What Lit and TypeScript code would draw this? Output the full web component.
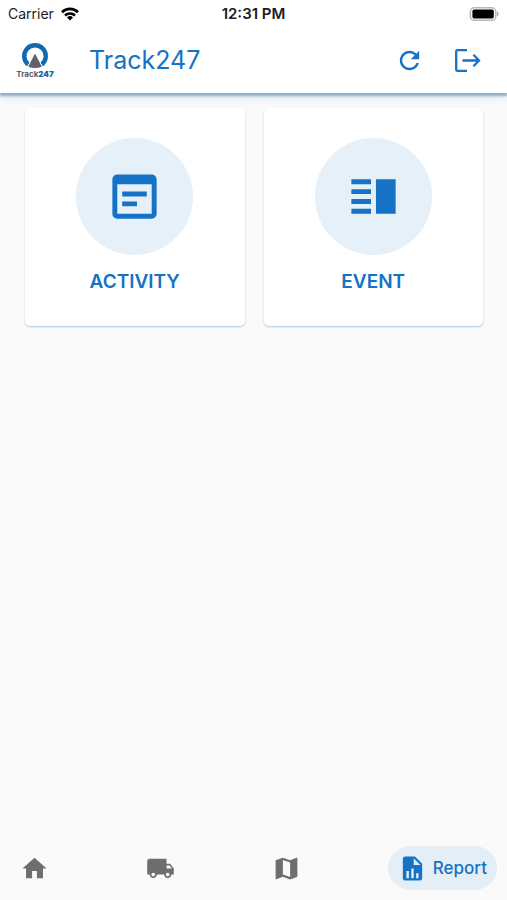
import { LitElement, html, css, svg } from "lit";
import { customElement, state } from "lit/decorators.js";
import { classMap } from "lit/directives/class-map.js";

const paths = {
  refresh:
    "M17.65 6.35C16.2 4.9 14.21 4 12 4c-4.42 0-7.99 3.58-7.99 8s3.57 8 7.99 8c3.73 0 6.84-2.55 7.73-6h-2.08c-.82 2.33-3.04 4-5.65 4-3.31 0-6-2.69-6-6s2.69-6 6-6c1.66 0 3.14.69 4.22 1.78L13 11h7V4l-2.35 2.35z",
  activity:
    "M19 3H5c-1.11 0-2 .9-2 2v14c0 1.1.89 2 2 2h14c1.1 0 2-.9 2-2V5c0-1.1-.89-2-2-2zm0 16H5V7h14v12zm-2-7H7v-2h10v2zm-4 4H7v-2h6v2z",
  event:
    "M3 15h8v-2H3v2zm0 4h8v-2H3v2zm0-8h8V9H3v2zm0-6v2h8V5H3zm10 0h8v14h-8V5z",
  home: "M10 20v-6h4v6h5v-8h3L12 3 2 12h3v8z",
  truck:
    "M20 8h-3V4H3c-1.1 0-2 .9-2 2v11h2c0 1.66 1.34 3 3 3s3-1.34 3-3h6c0 1.66 1.34 3 3 3s3-1.34 3-3h2v-5l-3-4zM6 18.5c-.83 0-1.5-.67-1.5-1.5s.67-1.5 1.5-1.5 1.5.67 1.5 1.5-.67 1.5-1.5 1.5zm13.5-9l1.96 2.5H17V9.5h2.5zm-1.5 9c-.83 0-1.5-.67-1.5-1.5s.67-1.5 1.5-1.5 1.5.67 1.5 1.5-.67 1.5-1.5 1.5z",
  map: "M20.5 3l-.16.03L15 5.1 9 3 3.36 4.9c-.21.07-.36.25-.36.48V20.5c0 .28.22.5.5.5l.16-.03L9 18.9l6 2.1 5.64-1.9c.21-.07.36-.25.36-.48V3.5c0-.28-.22-.5-.5-.5zM15 19l-6-2.11V5l6 2.11V19z",
  report:
    "M13 9h5.5L13 3.5V9M6 2h8l6 6v12a2 2 0 0 1-2 2H6a2 2 0 0 1-2-2V4c0-1.11.89-2 2-2m1 18h2v-6H7v6m4 0h2v-8h-2v8m4 0h2v-4h-2v4z",
};

type IconName = keyof typeof paths;

const icon = (name: IconName) => html`
  <svg class="icon" viewBox="0 0 24 24" aria-hidden="true">
    ${svg`<path d=${paths[name]}></path>`}
  </svg>
`;

@customElement("status-bar")
export class StatusBar extends LitElement {
  static styles = css`
    :host {
      display: grid;
      grid-template-columns: 1fr auto 1fr;
      align-items: center;
      height: 27px;
      padding: 0 8px;
      font-size: 14px;
      line-height: 20px;
      color: #1c1c1c;
    }
    .carrier {
      display: flex;
      align-items: center;
      gap: 7px;
    }
    .wifi {
      width: 18px;
      height: 14px;
    }
    .time {
      font-size: 15px;
      font-weight: 600;
    }
    .battery {
      justify-self: end;
      width: 30px;
      height: 14px;
    }
  `;

  render() {
    return html`
      <div class="carrier">
        <span>Carrier</span>
        <svg class="wifi" viewBox="0 0 18 14" aria-hidden="true">
          <g fill="none" stroke="#000" stroke-width="2.6">
            <path d="M1 5.2a11.4 11.4 0 0 1 16 0"></path>
            <path d="M4 8.5a7.2 7.2 0 0 1 10 0"></path>
          </g>
          <path d="M9 13.6l-3-3.1a4.3 4.3 0 0 1 6 0z"></path>
        </svg>
      </div>
      <span class="time">12:31 PM</span>
      <svg class="battery" viewBox="0 0 30 14" aria-hidden="true">
        <rect x="1.4" y="0.8" width="25.4" height="12.4" rx="3.8" fill="#fff" stroke="#b8b8b8" stroke-width="1.5"></rect>
        <rect x="3.4" y="2.4" width="21.4" height="9.2" rx="1.8"></rect>
        <path d="M28 4.8c2 .6 2 3.9 0 4.5z" fill="#a8a8a8"></path>
      </svg>
    `;
  }
}

@customElement("brand-logo")
export class BrandLogo extends LitElement {
  static styles = css`
    :host {
      display: flex;
      flex-direction: column;
      align-items: center;
      width: 40px;
    }
    .mark {
      width: 28px;
      height: 27px;
    }
    .name {
      font-size: 8px;
      line-height: 8px;
      font-weight: 700;
      color: #5c5c68;
    }
    .number {
      font-weight: 900;
      color: #1468ac;
    }
  `;

  render() {
    return html`
      <svg class="mark" viewBox="0 0 28 27" aria-hidden="true">
        <path d="M7.4 21.6A10.8 10.8 0 1 1 20.6 21.6" fill="none" stroke="#1268b0" stroke-width="4.4"></path>
        <path d="M14 8.5L22.4 25Q14 28 5.6 25z" fill="#fff"></path>
        <path d="M14 10.6L20.8 23.8Q14 26.4 7.2 23.8z" fill="#62606e"></path>
      </svg>
      <span class="name">Track<span class="number">247</span></span>
    `;
  }
}

@customElement("app-root")
export class AppRoot extends LitElement {
  @state() private tab: IconName = "report";

  private tabs: { id: IconName; label: string }[] = [
    { id: "home", label: "Home" },
    { id: "truck", label: "Vehicles" },
    { id: "map", label: "Map" },
    { id: "report", label: "Report" },
  ];

  private cards: { id: IconName; label: string }[] = [
    { id: "activity", label: "ACTIVITY" },
    { id: "event", label: "EVENT" },
  ];

  static styles = css`
    :host {
      display: flex;
      flex-direction: column;
      min-height: 100vh;
      background: #fafafa;
      color: #1572c4;
      font-family: Inter, "Liberation Sans", sans-serif;
    }
    *,
    *::before {
      box-sizing: border-box;
    }
    button {
      display: flex;
      align-items: center;
      justify-content: center;
      margin: 0;
      padding: 0;
      border: 0;
      background: none;
      color: inherit;
      font: inherit;
      cursor: pointer;
    }
    .icon {
      display: block;
      flex: none;
      width: 29px;
      height: 29px;
      fill: currentColor;
    }
    .top {
      background: #fff;
      box-shadow: 0 3px 2px #8fb1cd, 0 4px 8px #d3e0eb;
    }
    .bar {
      display: flex;
      align-items: center;
      height: 66px;
      padding: 0 25px 0 15px;
    }
    .title {
      flex: 1;
      margin: 0 0 0 34px;
      font-size: 25px;
      line-height: 32px;
      font-weight: 400;
    }
    .actions {
      display: flex;
      gap: 29px;
    }
    .exit {
      fill: none;
      stroke: currentColor;
      stroke-width: 2.3;
    }
    .cards {
      flex: 1;
      display: grid;
      grid-template-columns: 1fr 1fr;
      align-content: start;
      gap: 19px;
      padding: 15px 24px 24px 25px;
    }
    .card {
      flex-direction: column;
      gap: 13px;
      padding: 30px 0;
      border-radius: 5px;
      background: #fff;
      box-shadow: 0 1px 2px #b4c8d6;
      font-size: 19px;
      line-height: 28px;
      font-weight: 600;
    }
    .disc {
      display: grid;
      place-items: center;
      width: 117px;
      height: 117px;
      border-radius: 50%;
      background: #e5f0f9;
    }
    .disc .icon {
      width: 59px;
      height: 59px;
    }
    .tabs {
      display: flex;
      justify-content: space-between;
      padding: 10px;
    }
    .tab {
      gap: 6px;
      height: 44px;
      padding: 0 10px;
      border-radius: 22px;
      color: #6e6e6e;
      font-size: 17px;
      font-weight: 500;
    }
    .tab.active {
      background: #e3eef6;
      color: #1572c4;
    }
  `;

  render() {
    return html`
      <header class="top">
        <status-bar></status-bar>
        <div class="bar">
          <brand-logo></brand-logo>
          <h1 class="title">Track247</h1>
          <div class="actions">
            <button aria-label="Refresh">${icon("refresh")}</button>
            <button aria-label="Log out">
              <svg class="icon exit" viewBox="0 0 29 29" aria-hidden="true">
                <path d="M14 4.2H4.4Q3.2 4.2 3.2 5.4V23.6Q3.2 24.8 4.4 24.8H14"></path>
                <path d="M9.5 14.5H26M20.4 8.8L26 14.5L20.4 20.2"></path>
              </svg>
            </button>
          </div>
        </div>
      </header>
      <main class="cards">
        ${this.cards.map(
          (card) => html`
            <button class="card">
              <span class="disc">${icon(card.id)}</span>
              <span>${card.label}</span>
            </button>
          `
        )}
      </main>
      <nav class="tabs">
        ${this.tabs.map((tab) => {
          const active = tab.id === this.tab;
          return html`
            <button
              class=${classMap({ tab: true, active })}
              aria-label=${tab.label}
              @click=${() => (this.tab = tab.id)}
            >
              ${icon(tab.id)}${active ? html`<span>${tab.label}</span>` : ""}
            </button>
          `;
        })}
      </nav>
    `;
  }
}
